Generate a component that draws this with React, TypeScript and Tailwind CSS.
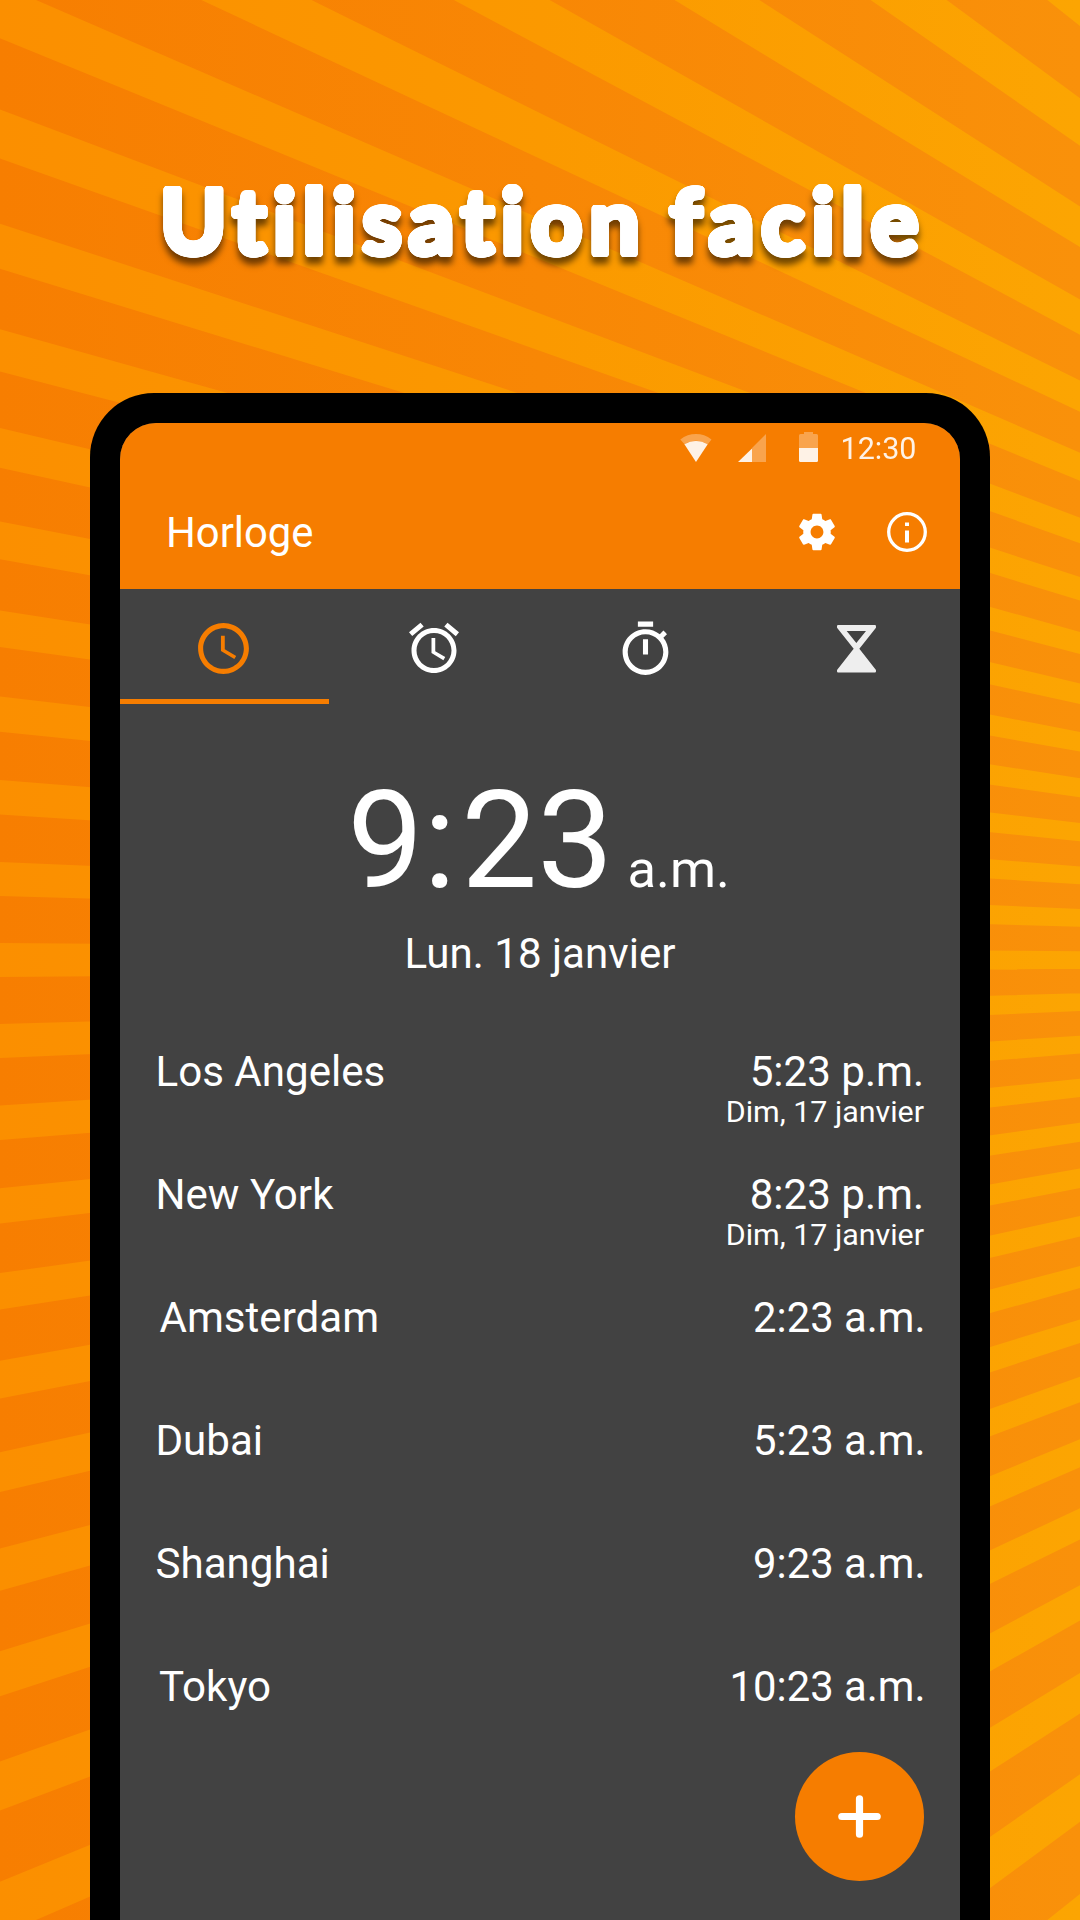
import React from "react";

const CX = 2250;
const CY = 960;
const SQUASH = 1236 / 2250;
const PITCH = (3.75 * Math.PI) / 180;
const HALF = 0.0137;

function rayPoint(angle: number) {
  const r = 6000;
  const x = CX - r * Math.cos(angle);
  const y = CY - r * Math.sin(angle) * SQUASH;
  return `${x.toFixed(1)},${y.toFixed(1)}`;
}

const rays = Array.from({ length: 41 }, (_, i) => (i - 20) * PITCH).map(
  (a) => `M${CX},${CY}L${rayPoint(a - HALF)}L${rayPoint(a + HALF)}Z`,
);

// A ring of solid offsets thickens the title and rounds its corners.
const titleRing = Array.from({ length: 32 }, (_, i) => {
  const a = (i / 32) * Math.PI * 2;
  return `${(3.2 * Math.cos(a)).toFixed(2)}px ${(3.2 * Math.sin(a)).toFixed(2)}px 0 #fff`;
}).join(",");

function Sunburst() {
  return (
    <svg className="absolute inset-0 h-[1920px] w-[1080px]" viewBox="0 0 1080 1920" aria-hidden="true">
      <defs>
        <linearGradient id="base" gradientUnits="userSpaceOnUse" x1="0" y1="0" x2="1080" y2="0">
          <stop offset="0" stopColor="#f77e01" />
          <stop offset="0.5" stopColor="#f88705" />
          <stop offset="1" stopColor="#f9910a" />
        </linearGradient>
        <linearGradient id="ray" gradientUnits="userSpaceOnUse" x1="0" y1="0" x2="1080" y2="0">
          <stop offset="0" stopColor="#fb8f00" />
          <stop offset="0.5" stopColor="#fb9900" />
          <stop offset="1" stopColor="#fca502" />
        </linearGradient>
      </defs>
      <rect width="1080" height="1920" fill="url(#base)" />
      <path d={rays.join("")} fill="url(#ray)" />
    </svg>
  );
}

function StatusBar() {
  return (
    <div className="flex h-[52px] items-start pl-[560px] text-white">
      <svg className="mt-[10px] h-[30px] w-[32px]" viewBox="0 0 32 30">
        <path d="M0.3 6.5C9.5-.8 22.5-.8 31.500 6.500L27.800 11.300C20 6.500 11.500 6.500 4.500 11.300Z" fill="#fff" opacity=".3" />
        <path d="M4.400 11.300C11.500 6.800 20.500 6.800 27.700 11.300L16 29Z" fill="#fff" opacity=".9" />
      </svg>
      <svg className="mt-[11px] ml-[26px] h-[28px] w-[28px]" viewBox="0 0 28 28">
        <path d="M14 14L28 0V28H14Z" fill="#fff" opacity=".3" />
        <path d="M0 28L14 14.500V28Z" fill="#fff" opacity=".9" />
      </svg>
      <svg className="mt-[9px] ml-[33px] h-[30px] w-[19px]" viewBox="0 0 19 30">
        <path d="M5 0H14V2H17.500Q19 2 19 3.500V16H0V3.500Q0 2 1.500 2H5Z" fill="#fff" opacity=".3" />
        <path d="M0 16H19V28.500Q19 30 17.500 30H1.500Q0 30 0 28.500Z" fill="#fff" opacity=".9" />
      </svg>
      <span className="ml-[22.500px] pt-[6px] text-[30.500px] leading-[40px] opacity-90">12:30</span>
    </div>
  );
}

function Toolbar() {
  return (
    <div className="flex h-[114px] items-center pl-[46px] text-white">
      <h2 className="w-[611px] pt-px text-[41.800px] leading-[56px]">Horloge</h2>
      <svg className="ml-[18px] h-[44px] w-[44px]" viewBox="0 0 24 24" fill="currentColor">
        <path d="M19.43 12.98c.04-.32.07-.64.07-.98s-.03-.66-.07-.98l2.11-1.65c.19-.15.24-.42.12-.64l-2-3.46c-.12-.22-.39-.3-.61-.22l-2.49 1c-.52-.4-1.08-.73-1.69-.98l-.38-2.65C14.46 2.18 14.25 2 14 2h-4c-.25 0-.46.18-.49.42l-.38 2.65c-.61.25-1.17.59-1.69.98l-2.49-1c-.23-.09-.49 0-.61.22l-2 3.46c-.13.22-.07.49.12.64l2.11 1.65c-.04.32-.07.65-.07.98s.03.66.07.98l-2.11 1.65c-.19.15-.24.42-.12.64l2 3.46c.12.22.39.3.61.22l2.49-1c.52.4 1.08.73 1.69.98l.38 2.65c.03.24.24.42.49.42h4c.25 0 .46-.18.49-.42l.38-2.65c.61-.25 1.17-.59 1.69-.98l2.49 1c.23.09.49 0 .61-.22l2-3.46c.12-.22.07-.49-.12-.64l-2.11-1.65zM12 15.5c-1.93 0-3.5-1.57-3.5-3.5s1.57-3.5 3.5-3.5 3.5 1.57 3.5 3.5-1.57 3.5-3.5 3.500z" />
      </svg>
      <svg className="ml-[48px] h-[40px] w-[40px]" viewBox="0 0 40 40">
        <circle cx="20" cy="20" r="18.300" fill="none" stroke="#fff" strokeWidth="3.300" />
        <path d="M18 10.500h4v3.500h-4zM18 18.500h4v12h-4z" fill="#fff" />
      </svg>
    </div>
  );
}

function Tabs() {
  return (
    <div>
      <div className="-ml-0.5 flex h-[110px] w-[844px] text-white">
        <div className="flex w-[211px] justify-center pt-[29px] text-[#f67d00]">
          <svg className="h-[61px] w-[61px]" viewBox="0 0 24 24" fill="currentColor">
            <path d="M11.990 2C6.470 2 2 6.480 2 12s4.470 10 9.990 10C17.520 22 22 17.520 22 12S17.520 2 11.990 2zM12 20c-4.420 0-8-3.580-8-8s3.580-8 8-8 8 3.580 8 8-3.580 8-8 8zm.5-13H11v6l5.250 3.150.750-1.230-4.500-2.670z" />
          </svg>
        </div>
        <div className="flex w-[211px] justify-center pt-[29px] pr-px">
          <svg className="h-[60px] w-[60px]" viewBox="0 0 24 24" fill="currentColor">
            <path d="M22 5.720l-4.600-3.860-1.290 1.530 4.600 3.860L22 5.720zM7.880 3.390L6.600 1.860 2 5.710l1.290 1.530 4.590-3.850zM12.500 8H11v6l4.750 2.850.75-1.230-4-2.370V8zM12 4c-4.970 0-9 4.030-9 9s4.020 9 9 9c4.970 0 9-4.030 9-9s-4.030-9-9-9zm0 16c-3.870 0-7-3.130-7-7s3.130-7 7-7 7 3.130 7 7-3.130 7-7 7z" />
          </svg>
        </div>
        <div className="flex w-[211px] justify-center pt-[30px]">
          <svg className="h-[61px] w-[61px]" viewBox="0 0 24 24" fill="currentColor">
            <path d="M15 1H9v2h6V1zm-4 13h2V8h-2v6zm8.030-6.610l1.420-1.420c-.43-.51-.9-.99-1.410-1.410l-1.420 1.420C16.070 4.740 14.120 4 12 4c-4.970 0-9 4.030-9 9s4.020 9 9 9 9-4.030 9-9c0-2.120-.74-4.070-1.970-5.610zM12 20c-3.870 0-7-3.130-7-7s3.130-7 7-7 7 3.130 7 7-3.130 7-7 7z" />
          </svg>
        </div>
        <div className="flex w-[211px] justify-center pt-[36px]">
          <svg className="h-[47.600px] w-[39px]" viewBox="0 0 117 143">
            <path
              fillRule="evenodd"
              fill="#eeeeee"
              d="M3 0H114Q117 0 117 4V8L67 71L117 135V140Q117 143 114 143H3Q0 143 0 140V135L50 71L0 8V3Q0 0 3 0ZM29 18L58 54L87 18Z"
            />
          </svg>
        </div>
      </div>
      <div className="h-[5px] w-[209px] bg-[#f67d00]" />
    </div>
  );
}

const cities = [
  { name: "Los Angeles", time: "5:23 p.m.", date: "Dim, 17 janvier", pad: "pl-[35.500px] pr-[36px]" },
  { name: "New York", time: "8:23 p.m.", date: "Dim, 17 janvier", pad: "pl-[35.500px] pr-[36px]" },
  { name: "Amsterdam", time: "2:23 a.m.", date: "", pad: "pl-[39.500px] pr-[34.500px]" },
  { name: "Dubai", time: "5:23 a.m.", date: "", pad: "pl-[35.500px] pr-[34.500px]" },
  { name: "Shanghai", time: "9:23 a.m.", date: "", pad: "pl-[35.500px] pr-[34.500px]" },
  { name: "Tokyo", time: "10:23 a.m.", date: "", pad: "pl-[39px] pr-[34.500px]" },
];

export default function App() {
  return (
    <div className="relative h-[1920px] w-[1080px] overflow-hidden font-['Roboto',sans-serif]">
      <Sunburst />
      <div className="relative flex h-full flex-col items-center">
        <h1
          className="h-[393px] shrink-0 pt-[160px] pl-[6px] font-['Lato',sans-serif] text-[89px] leading-[120px] font-bold tracking-[7.300px] whitespace-nowrap text-white [font-variant-ligatures:none] [word-spacing:-6px] drop-shadow-[0_7px_3px_rgba(0,0,0,0.55)]"
          style={{ textShadow: titleRing }}
        >
          Utilisation facile
        </h1>
        <div className="h-[1527px] w-[900px] shrink-0 rounded-t-[64px] bg-black px-[30px] pt-[30px]">
          <div className="relative h-full overflow-hidden rounded-t-[36px] bg-[#424242] text-white">
            <div className="bg-[#f67d00]">
              <StatusBar />
              <Toolbar />
            </div>
            <Tabs />
            <div className="flex h-[220px] items-baseline justify-center pt-[57px] pr-[3px] leading-[160px]">
              <span className="text-[135.500px]">
                9<span className="tracking-[5px]">:</span>23
              </span>
              <span className="ml-[14px] text-[52.500px]">a.m.</span>
            </div>
            <p className="text-center text-[42.100px] leading-[60px]">Lun. 18 janvier</p>
            <ul className="mt-[63px]">
              {cities.map((c) => (
                <li key={c.name} className={`flex h-[123px] justify-between text-[42.100px] leading-[50px] ${c.pad}`}>
                  <span>{c.name}</span>
                  <div className="text-right">
                    <div className={c.date ? "" : "text-[41.800px]"}>{c.time}</div>
                    {c.date && <div className="-mt-[3px] text-[30.400px] leading-[36px]">{c.date}</div>}
                  </div>
                </li>
              ))}
            </ul>
            <button
              aria-label="Ajouter"
              className="absolute top-[1328.500px] left-[674.500px] flex h-[129px] w-[129px] items-center justify-center rounded-full bg-[#f67d00]"
            >
              <svg className="h-[43px] w-[43px]" viewBox="0 0 43 43">
                <path d="M21.500 3.800V39.200M3.800 21.500H39.200" stroke="#fff" strokeWidth="7.200" strokeLinecap="round" />
              </svg>
            </button>
          </div>
        </div>
      </div>
    </div>
  );
}
